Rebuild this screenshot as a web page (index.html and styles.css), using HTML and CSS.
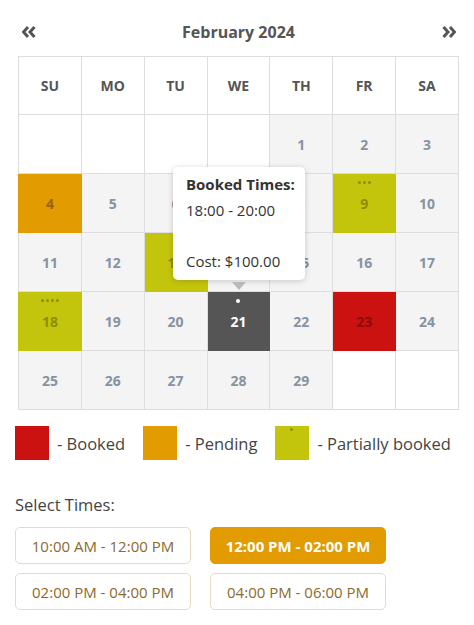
FILE: index.html
```html
<!DOCTYPE html>
<html lang="en">
<head>
    <meta charset="UTF-8">
    <meta name="viewport" content="width=device-width, initial-scale=1.0">
    <title>Booking Calendar</title>
    <link rel="stylesheet" href="styles.css">
</head>
<body>
    <div class="page">
        <div class="calendar">
            <div class="cal-header">
                <button class="nav-btn" aria-label="Previous month">
                    <svg width="14" height="12" viewBox="0 0 14 12"><path d="M6 1L1.5 6L6 11M12.5 1L8 6L12.5 11" fill="none" stroke="#555" stroke-width="3"/></svg>
                </button>
                <h2 class="month-title">February 2024</h2>
                <button class="nav-btn" aria-label="Next month">
                    <svg width="14" height="12" viewBox="0 0 14 12"><path d="M1.5 1L6 6L1.5 11M8 1L12.5 6L8 11" fill="none" stroke="#555" stroke-width="3"/></svg>
                </button>
            </div>

            <table class="cal-table">
                <thead>
                    <tr>
                        <th>SU</th><th>MO</th><th>TU</th><th>WE</th><th>TH</th><th>FR</th><th>SA</th>
                    </tr>
                </thead>
                <tbody>
                    <tr>
                        <td class="empty"></td><td class="empty"></td><td class="empty"></td><td class="empty"></td>
                        <td>1</td><td>2</td><td>3</td>
                    </tr>
                    <tr>
                        <td class="pending">4</td><td>5</td><td>6</td><td>7</td><td>8</td>
                        <td class="partial"><span class="dots"><i></i><i></i><i></i></span>9</td>
                        <td>10</td>
                    </tr>
                    <tr>
                        <td>11</td><td>12</td>
                        <td class="partial"><span class="dots"><i></i></span>13</td>
                        <td>14</td><td>15</td><td>16</td><td>17</td>
                    </tr>
                    <tr>
                        <td class="partial"><span class="dots"><i></i><i></i><i></i><i></i></span>18</td>
                        <td>19</td><td>20</td>
                        <td class="selected"><span class="dots"><i></i></span>21</td>
                        <td>22</td>
                        <td class="booked">23</td>
                        <td>24</td>
                    </tr>
                    <tr>
                        <td>25</td><td>26</td><td>27</td><td>28</td><td>29</td>
                        <td class="empty"></td><td class="empty"></td>
                    </tr>
                </tbody>
            </table>

            <div class="tooltip">
                <div class="tip-title">Booked Times:</div>
                <div>18:00 - 20:00</div>
                <div>&nbsp;</div>
                <div>Cost: $100.00</div>
            </div>
            <div class="tip-arrow"></div>
        </div>

        <div class="legend">
            <div class="legend-item"><span class="swatch booked"></span>- Booked</div>
            <div class="legend-item"><span class="swatch pending"></span>- Pending</div>
            <div class="legend-item"><span class="swatch partial"><i></i></span>- Partially booked</div>
        </div>

        <div class="times">
            <div class="times-label">Select Times:</div>
            <div class="time-grid">
                <button class="time-btn">10:00 AM - 12:00 PM</button>
                <button class="time-btn active">12:00 PM - 02:00 PM</button>
                <button class="time-btn">02:00 PM - 04:00 PM</button>
                <button class="time-btn">04:00 PM - 06:00 PM</button>
            </div>
        </div>
    </div>
</body>
</html>
```

FILE: styles.css
```css
body {
    margin: 0;
    font-family: "Open Sans", Arial, sans-serif;
    background-color: #fff;
    color: #444;
}
.page {
    padding: 19px 15px 0;
}
.calendar {
    position: relative;
    width: 441px;
    margin-left: 3px;
}
.cal-header {
    display: flex;
    align-items: center;
    justify-content: space-between;
    height: 26px;
    margin-bottom: 11px;
}
.nav-btn {
    background: none;
    border: none;
    padding: 0 3px 0 4px;
    height: 26px;
    cursor: pointer;
    display: flex;
    align-items: center;
}
.month-title {
    margin: 0;
    font-size: 16px;
    font-weight: 700;
    color: #555;
}
.cal-table {
    width: 441px;
    border-collapse: collapse;
    table-layout: fixed;
}
.cal-table th,
.cal-table td {
    border: 1px solid #ddd;
    text-align: center;
    font-size: 14px;
    font-weight: 700;
    padding: 0;
}
.cal-table th {
    height: 57px;
    color: #555;
}
.cal-table td {
    position: relative;
    height: 58px;
    background-color: #f4f4f4;
    color: #8593a3;
}
.cal-table td.empty {
    background-color: #fff;
}
.cal-table td.pending {
    background-color: #e29b00;
    border-color: #e29b00;
    color: #98650a;
}
.cal-table td.partial {
    background-color: #c3c50c;
    border-color: #c3c50c;
    color: #8b8d06;
}
.cal-table td.booked {
    background-color: #cc1111;
    border-color: #cc1111;
    color: #8a0d0d;
}
.cal-table td.selected {
    background-color: #555;
    border-color: #555;
    color: #fff;
}
.dots {
    position: absolute;
    top: 7px;
    left: 0;
    right: 0;
    display: flex;
    justify-content: center;
    gap: 2px;
}
.dots i {
    width: 3px;
    height: 3px;
    border-radius: 50%;
    background-color: #8b8d06;
}
.selected .dots i {
    width: 4px;
    height: 4px;
    background-color: #fff;
}
.tooltip {
    position: absolute;
    left: 155px;
    top: 148px;
    width: 106px;
    padding: 5px 13px 6px;
    background-color: #fff;
    border-radius: 5px;
    box-shadow: 0 1px 6px rgba(0, 0, 0, 0.18);
    font-size: 15px;
    line-height: 25.5px;
    color: #333;
    white-space: nowrap;
}
.tip-title {
    font-weight: 700;
}
.tip-arrow {
    position: absolute;
    left: 214px;
    top: 263px;
    width: 0;
    height: 0;
    border-left: 7px solid transparent;
    border-right: 7px solid transparent;
    border-top: 8px solid #b9b9b9;
}
.legend {
    display: flex;
    align-items: center;
    margin-top: 16px;
}
.legend-item {
    display: flex;
    align-items: center;
    font-size: 16.5px;
    color: #444;
    margin-right: 18px;
    white-space: nowrap;
}
.swatch {
    position: relative;
    flex-shrink: 0;
    width: 34px;
    height: 34px;
    margin-right: 8px;
}
.swatch.booked {
    background-color: #cc1111;
}
.swatch.pending {
    background-color: #e29b00;
}
.swatch.partial {
    background-color: #c3c50c;
}
.swatch.partial i {
    position: absolute;
    top: 2px;
    left: 15px;
    width: 3px;
    height: 3px;
    border-radius: 50%;
    background-color: #8b8d06;
}
.times {
    margin-top: 33px;
}
.times-label {
    font-size: 16.5px;
    color: #444;
    margin-bottom: 11px;
}
.time-grid {
    display: grid;
    grid-template-columns: 176px 176px;
    column-gap: 19px;
    row-gap: 9px;
}
.time-btn {
    height: 37px;
    border: 1px solid #ead9c3;
    border-radius: 5px;
    background-color: #fff;
    font-family: "Open Sans", Arial, sans-serif;
    font-size: 15px;
    color: #8c6a2c;
    cursor: pointer;
}
.time-btn.active {
    background-color: #e29b00;
    border-color: #e29b00;
    color: #fff;
    font-weight: 700;
}
```
